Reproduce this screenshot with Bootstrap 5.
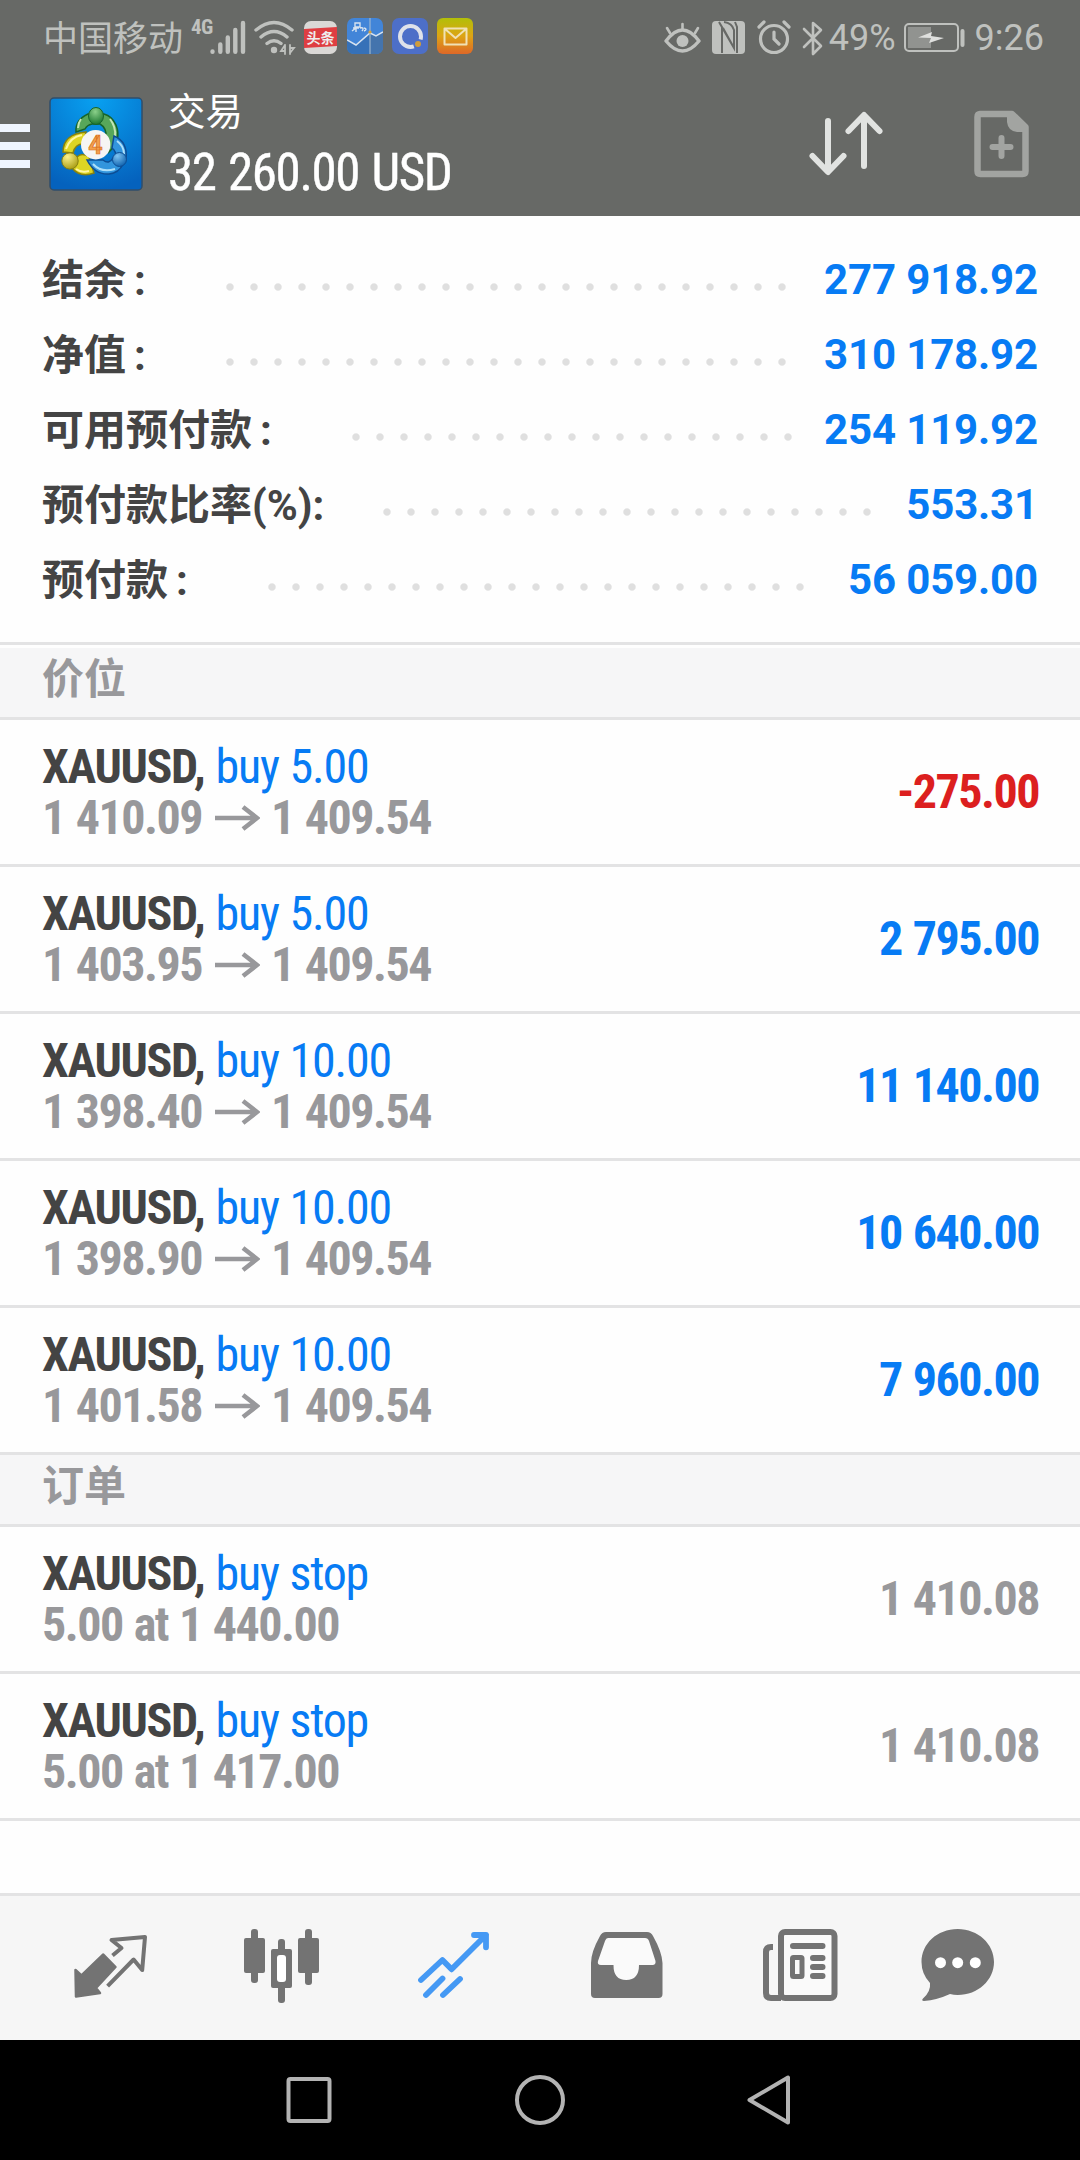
<!DOCTYPE html>
<html lang="zh-CN">
<head>
<meta charset="utf-8">
<meta name="viewport" content="width=device-width, initial-scale=1">
<title>交易</title>
<link href="https://cdn.jsdelivr.net/npm/bootstrap@5.3.0/dist/css/bootstrap.min.css" rel="stylesheet">
<style>
body{width:1080px;height:2160px;overflow:hidden;background:#fefefe;font-family:Roboto,"Noto Sans CJK SC",sans-serif;color:#444}
svg{display:block;flex:none}
.topbar{background:#676966;height:216px}
.statusbar{height:72px;padding:3px 36px 0 43px;color:#bfc1be;font-size:36px;line-height:1}
.carrier{font:400 35px/1 "Noto Sans CJK SC",sans-serif;width:140px;margin-top:-4px}
.net-type{font:bold 21px/1 "Roboto Condensed",Roboto,sans-serif;font-stretch:75%;letter-spacing:-.5px;margin:-20px 0 0 8px;width:19px}
.cond{font-family:"Roboto Condensed",Roboto,sans-serif;font-stretch:75%}
.titlebar{height:144px}
.title-name{font:400 37.500px/48px "Noto Sans CJK SC",sans-serif;margin-top:13px}
.title-sum{font-size:51px;line-height:60px;margin-top:10px;letter-spacing:-1.400px;word-spacing:2.200px;-webkit-text-stroke:.4px #fff}
.summary{height:426px;padding:26px 42px 0 42px;font-size:42px;font-weight:700}
.sum-row{height:75px;line-height:75px}
.sum-label{white-space:nowrap;margin-top:2px;width:calc(var(--start)*1px)}
.sum-value{letter-spacing:-.150px}
.gap-colon{margin-left:8px}
.dot-fill{height:8px;margin-top:15px;width:calc(var(--n)*24px);background:radial-gradient(circle at 12px 4px,#dfdfdf 3.2px,transparent 4.2px) 0 0/24px 8px repeat-x}
.blue{color:#077bf4}.red{color:#dc1f1f}.dim{color:#98989b}
.rule-top{border-top:3px solid #e3e3e4}
.rule-bottom{border-bottom:3px solid #e3e3e4}
.section-title{height:69px;background:#f6f6f7;padding-left:42px;font:bold 42px/55px "Noto Sans CJK SC",sans-serif}
.deal{height:147px;padding:0 42px;font-size:48px;line-height:51px}
.deal b{letter-spacing:-1.350px}
.deal .blue{letter-spacing:-1.200px;word-spacing:1px}
.deal .fw-bold,.deal .amount{letter-spacing:-1.500px;word-spacing:1.400px}
.deal .amount{margin-top:-2px;margin-right:-1px}
.arrow{margin:0 11px 0 13px}
.tabs{margin-top:72px;height:147px;background:#f6f6f6;padding-left:24px;color:#737373}
.sysnav{height:120px;background:#000;color:#b3b3b3}
</style>
</head>
<body>
<header class="topbar">
  <div class="statusbar d-flex align-items-center">
    <span class="carrier text-nowrap">中国移动</span>
    <span class="net-type">4G</span>
    <svg width="36" height="36" viewBox="0 0 36 36" stroke="currentColor" stroke-width="4.4" stroke-linecap="round"><path d="M2.5 31.5v.3M10.3 24.5v7.3M17.8 17.5v14.3M25.3 10v21.8M33 3v28.8"/></svg>
    <svg class="ms-2" width="42" height="36" viewBox="0 0 42 36" fill="none" stroke="currentColor" stroke-width="3.4" stroke-linecap="round"><path d="M2 10Q20 -5 38 10M7 17Q20 6 33 17M13 23.500Q20 18 27 23.500"/><circle cx="20" cy="30" r="3.200" fill="currentColor" stroke="none"/><path d="M31 25v9M31 25l-4 6h4M36 25v9M36 33l4-5h-4" stroke-width="1.800"/></svg>
    <svg style="margin-left:8px" width="33" height="36" viewBox="0 0 33 36"><rect y="1" width="33" height="33" rx="7" fill="#dad8d6"/><path d="M0 9L33 7V26L0 28Z" fill="#df3e42"/><text x="2.500" y="22.500" font-family="Noto Sans CJK SC" font-weight="700" font-size="14" fill="#eee">头条</text></svg>
    <svg style="margin-left:10px;margin-top:-3px" width="36" height="36" viewBox="0 0 36 36"><rect width="36" height="36" rx="7" fill="#4285d8"/><path d="M0 22L9 27 23 15V36H7Q0 36 0 29Z" fill="#3671b8"/><path d="M23 15l6 3 7-4v15q0 7-7 7h-6z" fill="#4474ad"/><path d="M0 22L9 27 23 15l6 3 7-4" fill="none" stroke="#d6e2ef" stroke-width="1.500"/><path d="M23 0v36" stroke="#abc0d2"/><circle cx="23" cy="14" r="1.600" fill="#d5a13e"/><path d="M8 5h5v4H8zM6 10h6M5 13l4-3v4M13 10q5-1 2 3M17 10q4 1 0 3" fill="none" stroke="#d6e2ef" stroke-width="1.400"/></svg>
    <svg style="margin-left:9px;margin-top:-3px" width="36" height="36" viewBox="0 0 36 36"><rect width="36" height="36" rx="7" fill="#4d6fc8"/><circle cx="18.500" cy="18.500" r="10.500" fill="none" stroke="#dfe2ea" stroke-width="4" stroke-dasharray="56 10" stroke-dashoffset="-13"/><circle cx="26" cy="26" r="3" fill="#cf9c3c"/></svg>
    <svg style="margin-left:9px;margin-top:-3px" width="36" height="36" viewBox="0 0 36 36"><defs><linearGradient id="mailbg" x2="0" y2="1"><stop stop-color="#b2bf08"/><stop offset=".5" stop-color="#dda414"/><stop offset="1" stop-color="#de6828"/></linearGradient></defs><rect width="36" height="36" rx="6" fill="url(#mailbg)"/><path d="M7.500 10.500h22v16h-22zM8 11l10.500 9L29 11" fill="none" stroke="#f0e1b5" stroke-width="2" stroke-linejoin="round"/></svg>
    <svg class="ms-auto" width="37" height="36" viewBox="0 0 37 36" fill="none" stroke="currentColor" stroke-width="3.400" stroke-linecap="round"><path d="M2 21Q18.500 -1 35 21Q18.500 41 2 21Z" stroke-linejoin="round"/><circle cx="18.500" cy="21" r="6" fill="currentColor" stroke="none"/><path d="M18.500 4v5M3 8l3 5M34 8l-3 5" stroke-width="2.600"/></svg>
    <svg style="margin-left:11px" width="33" height="36" viewBox="0 0 33 36"><rect y="1" width="33" height="33" rx="4" fill="currentColor"/><path d="M7 2L10 7V33M7 2L22 28V14M11 8L22 28M23 2L25 7V33M12 2Q20 3 22 10V14" fill="none" stroke="#676966" stroke-width="2"/></svg>
    <svg style="margin-left:12px" width="34" height="36" viewBox="0 1 34 36" fill="none" stroke="currentColor" stroke-width="3.200" stroke-linecap="round"><circle cx="17" cy="20" r="13.500"/><path d="M17 13v7l5 5M2 8l5-5M32 8l-5-5"/></svg>
    <svg style="margin-left:11px" width="22" height="36" viewBox="0 0 22 36" fill="none" stroke="currentColor" stroke-width="2.600" stroke-linejoin="round" stroke-linecap="round"><path d="M2 9l17 17-8 8V3l8 7L2 27"/></svg>
    <span style="margin-left:5px">49%</span>
    <svg style="margin-left:8px" width="62" height="36" viewBox="0 1 62 36"><rect x="1" y="5" width="53" height="27" rx="4" fill="none" stroke="currentColor" stroke-width="2"/><rect x="4" y="8" width="23" height="21" fill="#919390"/><path d="M14 18.500L28 13l-1 4 13 2-15 5 2-5z" fill="#dfe0de"/><path d="M58.500 12v14" stroke="currentColor" stroke-width="4" stroke-linecap="round"/></svg>
    <span style="margin-left:9px">9:26</span>
  </div>
  <div class="titlebar d-flex">
    <svg width="30" height="144" viewBox="0 0 30 144" fill="#f0f6ff"><path d="M0 52h30v8H0zM0 70h30v8H0zM0 88h30v8H0z"/></svg>
    <svg style="margin:25px 0 0 19px" width="94" height="94" viewBox="-1 -1 94 94">
      <defs>
        <radialGradient id="sky" cx=".5" cy="0" r="1"><stop stop-color="#08a1f1"/><stop offset="1" stop-color="#0562bd"/></radialGradient>
        <radialGradient id="gr" cx=".45" cy=".25" r=".8"><stop stop-color="#8bd08a"/><stop offset="1" stop-color="#14712a"/></radialGradient>
        <radialGradient id="ye" cx=".35" cy=".25" r=".8"><stop stop-color="#fbf18b"/><stop offset="1" stop-color="#a89b11"/></radialGradient>
        <radialGradient id="bl" cx=".35" cy=".25" r=".8"><stop stop-color="#7fc4f2"/><stop offset="1" stop-color="#0d60ad"/></radialGradient>
      </defs>
      <rect width="92" height="92" rx="4" fill="url(#sky)" stroke="#304e6b" stroke-width="1.500"/>
      <path d="M38 16Q25 22 26 34l9-3q2-4 7-5h8q7 4 6 14 4 7 3 14Q72 42 66 27 62 18 54 16Z" fill="#57a75a" stroke="#17642b" stroke-width="1.500"/>
      <path d="M31 21q-3 4-3 9M60 21q6 8 5 17" fill="none" stroke="#c3e6b4" stroke-width="2"/>
      <path d="M36 34Q13 36 13 54l10 1q2-9 10-9zM22 70Q30 80 44 75l-5-16q-7-5-12 0z" fill="#ded524" stroke="#89820f" stroke-width="1.500"/>
      <path d="M16 51q4-12 16-14M26 71q5 4 13 2" fill="none" stroke="#fff6a2" stroke-width="2"/>
      <path d="M64 38q14 6 12 23l-10-2q0-6-4-9zM37 62q8 15 22 14 10-1 14-10l-10-6q-4 7-10 2z" fill="#3295dd" stroke="#0d4d94" stroke-width="1.500"/>
      <path d="M67 43q7 5 7 13M43 66q8 9 22 5" fill="none" stroke="#aee0fa" stroke-width="2"/>
      <ellipse cx="46" cy="18" rx="7.500" ry="8.500" fill="url(#gr)" stroke="#17642b"/>
      <circle cx="20" cy="63" r="8.200" fill="url(#ye)" stroke="#857e11"/>
      <circle cx="69.500" cy="61.500" r="7" fill="url(#bl)" stroke="#0d4d94"/>
      <circle cx="45.700" cy="46.700" r="14.700" fill="#f6f5f4"/>
      <text x="45.300" y="55.500" text-anchor="middle" font-family="Roboto" font-weight="700" font-size="25" fill="#f3a04c" stroke="#d9701d" stroke-width=".7">4</text>
    </svg>
    <div class="text-white text-nowrap" style="margin-left:25px">
      <div class="title-name">交易</div>
      <div class="title-sum cond">32 260.00 USD</div>
    </div>
    <svg class="ms-auto" width="76" height="144" viewBox="808 72 76 144" fill="none" stroke="#e1e3e1" stroke-width="6" stroke-linecap="round" stroke-linejoin="round"><path d="M828 121v50M812.500 156l15.500 16 15.500-16M864 166v-50M848.500 131l15.500-16 15.500 16"/></svg>
    <svg style="margin:0 51px 0 90px" width="55" height="144" viewBox="0 0 55 144" fill="none" stroke="#a2a4a1" stroke-width="6.500"><path d="M6 42H38L51.500 55V99q0 3-3 3H6.500q-3 0-3-3V45q0-3 3-3Z" stroke-linejoin="round"/><path d="M33 42V50Q34 59 43 60H52V55L39 42Z" fill="#a2a4a1" stroke="none"/><path d="M27.500 66v18M18.500 75h18" stroke-width="6" stroke-linecap="round"/></svg>
  </div>
</header>

<main>
  <section class="summary">
    <div class="sum-row d-flex align-items-center" style="--start:176;--n:24"><span class="sum-label">结余<span class="gap-colon">:</span></span><span class="dot-fill"></span><span class="sum-value blue ms-auto">277 918.92</span></div>
    <div class="sum-row d-flex align-items-center" style="--start:176;--n:24"><span class="sum-label">净值<span class="gap-colon">:</span></span><span class="dot-fill"></span><span class="sum-value blue ms-auto">310 178.92</span></div>
    <div class="sum-row d-flex align-items-center" style="--start:302;--n:19"><span class="sum-label">可用预付款<span class="gap-colon">:</span></span><span class="dot-fill"></span><span class="sum-value blue ms-auto">254 119.92</span></div>
    <div class="sum-row d-flex align-items-center" style="--start:333;--n:21"><span class="sum-label">预付款比率(%):</span><span class="dot-fill"></span><span class="sum-value blue ms-auto">553.31</span></div>
    <div class="sum-row d-flex align-items-center" style="--start:218;--n:23"><span class="sum-label">预付款<span class="gap-colon">:</span></span><span class="dot-fill"></span><span class="sum-value blue ms-auto">56 059.00</span></div>
  </section>

  <div class="rule-top rule-bottom"><div class="section-title dim" style="margin-top:3px">价位</div></div>
  <div class="deal rule-bottom d-flex align-items-center justify-content-between cond"><div><div><b>XAUUSD,</b> <span class="blue">buy 5.00</span></div><div class="dim fw-bold d-flex align-items-center"><span>1 410.09</span><svg class="arrow" width="45" height="26" viewBox="0 0 45 26" fill="none" stroke="currentColor" stroke-width="4.500"><path d="M0 13h42M28 2l14 11-14 11"/></svg><span>1 409.54</span></div></div><b class="amount red">-275.00</b></div>
  <div class="deal rule-bottom d-flex align-items-center justify-content-between cond"><div><div><b>XAUUSD,</b> <span class="blue">buy 5.00</span></div><div class="dim fw-bold d-flex align-items-center"><span>1 403.95</span><svg class="arrow" width="45" height="26" viewBox="0 0 45 26" fill="none" stroke="currentColor" stroke-width="4.500"><path d="M0 13h42M28 2l14 11-14 11"/></svg><span>1 409.54</span></div></div><b class="amount blue">2 795.00</b></div>
  <div class="deal rule-bottom d-flex align-items-center justify-content-between cond"><div><div><b>XAUUSD,</b> <span class="blue">buy 10.00</span></div><div class="dim fw-bold d-flex align-items-center"><span>1 398.40</span><svg class="arrow" width="45" height="26" viewBox="0 0 45 26" fill="none" stroke="currentColor" stroke-width="4.500"><path d="M0 13h42M28 2l14 11-14 11"/></svg><span>1 409.54</span></div></div><b class="amount blue">11 140.00</b></div>
  <div class="deal rule-bottom d-flex align-items-center justify-content-between cond"><div><div><b>XAUUSD,</b> <span class="blue">buy 10.00</span></div><div class="dim fw-bold d-flex align-items-center"><span>1 398.90</span><svg class="arrow" width="45" height="26" viewBox="0 0 45 26" fill="none" stroke="currentColor" stroke-width="4.500"><path d="M0 13h42M28 2l14 11-14 11"/></svg><span>1 409.54</span></div></div><b class="amount blue">10 640.00</b></div>
  <div class="deal rule-bottom d-flex align-items-center justify-content-between cond"><div><div><b>XAUUSD,</b> <span class="blue">buy 10.00</span></div><div class="dim fw-bold d-flex align-items-center"><span>1 401.58</span><svg class="arrow" width="45" height="26" viewBox="0 0 45 26" fill="none" stroke="currentColor" stroke-width="4.500"><path d="M0 13h42M28 2l14 11-14 11"/></svg><span>1 409.54</span></div></div><b class="amount blue">7 960.00</b></div>
  <div class="rule-bottom"><div class="section-title dim">订单</div></div>
  <div class="deal rule-bottom d-flex align-items-center justify-content-between cond"><div><div><b>XAUUSD,</b> <span class="blue">buy stop</span></div><div class="dim fw-bold">5.00 at 1 440.00</div></div><b class="amount dim">1 410.08</b></div>
  <div class="deal rule-bottom d-flex align-items-center justify-content-between cond"><div><div><b>XAUUSD,</b> <span class="blue">buy stop</span></div><div class="dim fw-bold">5.00 at 1 417.00</div></div><b class="amount dim">1 410.08</b></div>
</main>

<nav class="tabs rule-top d-flex">
  <svg width="172" height="144"><path d="M88.500 59.500l9-7.500-10-8 33.500-3-2.800 33-8.600-10.500-26 26.700" fill="none" stroke="currentColor" stroke-width="4" stroke-linejoin="round"/><path d="M51.500 74l6 5.500L79.300 58.500 91.500 71 72 92l4 5-24 3.500z" fill="currentColor" stroke="currentColor" stroke-width="2.500" stroke-linejoin="round"/></svg>
  <svg width="172" height="144" fill="currentColor"><rect x="48" y="42" width="21" height="35" rx="2"/><rect x="55" y="33" width="7" height="54" rx="3"/><rect x="75" y="53" width="21" height="39" rx="2"/><rect x="82" y="43" width="7" height="64" rx="3"/><rect x="81" y="59" width="9" height="27" rx="3" fill="#fff"/><rect x="102" y="42" width="21" height="35" rx="2"/><rect x="109" y="33" width="7" height="56" rx="3"/></svg>
  <svg width="172" height="144" fill="none" stroke="#4599f4" stroke-width="5.800" stroke-linecap="round" stroke-linejoin="round"><path d="M53 84l21.400-20 9.200 9.300L118 39M106 39h12v12.300M58 99l16.500-16.500M75 99l17-16"/></svg>
  <svg width="172" height="144"><path d="M66 36h41q4 0 6 4 9 16 9.500 27v31q0 4-4 4H55q-4 0-4-4V67Q51 56 60 40q2-4 6-4z" fill="currentColor"/><path d="M68 42h37q3 0 4 3l6.500 20q.5 4-3 4H99q0 15-12.800 15T73.500 69H61q-4 0-3-4l7-20q1-3 3-3z" fill="#fafafa"/></svg>
  <svg width="172" height="144" fill="none" stroke="currentColor" stroke-width="6"><rect x="69" y="36" width="53.500" height="66" rx="4" fill="#fafafa"/><path d="M61 51h-2q-5 0-5 5v41q0 5 5 5h10"/><path d="M81 50h29.500M101 62h9.500M101 71h9.500M101 80h9.500" stroke-linecap="round"/><rect x="80.500" y="61.500" width="9.500" height="19" rx="1" stroke-width="5"/></svg>
  <svg width="172" height="144"><path d="M73.700 33C94 33 110 48 110 66S94 99 73.700 99q-4 0-7.700-1-13 6-26 7-3-.5-1-2.500 8-7 7-15.500-8.500-9-8.500-21C37.500 48 53 33 73.700 33z" fill="currentColor"/><g fill="#fff"><circle cx="56.500" cy="66.700" r="5.500"/><circle cx="73.700" cy="66.700" r="5.500"/><circle cx="91.300" cy="66.700" r="5.500"/></g></svg>
</nav>
<div class="sysnav d-flex justify-content-center">
  <svg width="231" height="120" fill="none" stroke="currentColor" stroke-width="4"><rect x="64.500" y="39" width="41" height="42" rx="2"/></svg>
  <svg width="170" height="120" fill="none" stroke="currentColor" stroke-width="4"><circle cx="85" cy="60" r="23"/></svg>
  <svg width="231" height="120" fill="none" stroke="currentColor" stroke-width="4" stroke-linejoin="round"><path d="M163 37.500v45L124.500 60z"/></svg>
</div>
<script src="https://cdn.jsdelivr.net/npm/bootstrap@5.3.0/dist/js/bootstrap.bundle.min.js"></script>
</body>
</html>
